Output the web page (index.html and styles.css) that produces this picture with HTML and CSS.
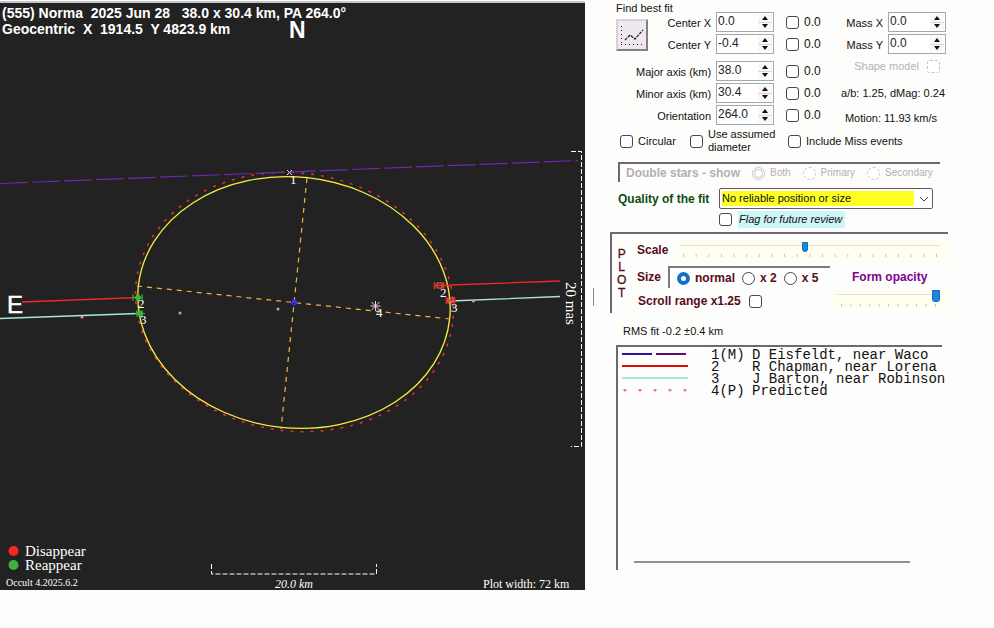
FILE: index.html
```html
<!DOCTYPE html>
<html lang="en">
<head>
<meta charset="utf-8">
<title>Occult - (555) Norma</title>
<link rel="stylesheet" href="styles.css">
</head>
<body>
<main class="app">
  <svg class="plot" viewBox="0 0 585 587" role="img" aria-label="Occultation plot">
    <g transform="translate(0 -3)">
      <g class="title">
        <text x="2" y="18">(555) Norma  2025 Jun 28   38.0 x 30.4 km, PA 264.0°</text>
        <text x="2" y="34">Geocentric  X  1914.5  Y 4823.9 km</text>
      </g>
      <text class="north" x="289" y="38">N</text>
      <text class="east" x="7" y="313">E</text>

      <ellipse class="limit" cx="294.5" cy="302" rx="159.5" ry="129" transform="rotate(8 294.5 302)"/>
      <ellipse class="fit" cx="294" cy="302.5" rx="156.5" ry="125.5" transform="rotate(6 294 302.5)"/>
      <path class="axis" d="M137 286L450 319M307 178L281 429"/>

      <path class="miss" d="M0 183.5L578 160.5"/>
      <path class="chord-red" d="M22 302L138 297.5M450 285L560 281"/>
      <path class="chord-teal" d="M0 318.5L138 313.5M450 301L560 296.5"/>

      <g class="green-mark">
        <path d="M133 294v7M137 294v7M142 294v7M133 297.5h10M137 310v7M142 310v7M135 313.500h10"/>
        <circle cx="138" cy="297.5" r="2.500"/><circle cx="140" cy="313.500" r="2.500"/>
      </g>
      <g class="red-mark">
        <path d="M434.500 282v7M443.500 282v7M434.500 285.500h16M446.500 297v7M454.500 297v7M446.500 300.500h9"/>
        <path class="box" d="M437 283h5v5h-5zM448 298h5v5h-5z"/>
      </g>

      <g class="predicted">
        <circle cx="82" cy="317" r="1.500"/><circle cx="180" cy="313" r="1.500"/>
        <circle cx="278" cy="309" r="1.500"/><circle cx="473.500" cy="301" r="1.500"/>
      </g>
      <path class="star" d="M375.500 301v10M370.500 306h10M371.500 302l8 8M379.500 302l-8 8"/>
      <path class="cross" d="M287 170l5 5M292 170l-5 5"/>
      <circle class="centre" cx="294" cy="302.500" r="2"/>
      <g class="number">
        <text x="290" y="184">1</text>
        <text x="138" y="308">2</text>
        <text x="140" y="324">3</text>
        <text x="440" y="297">2</text>
        <text x="451" y="312">3</text>
        <text x="376" y="317">4</text>
      </g>

      <path class="scale-bar" d="M571 151.500h10.500V446.500H571M211.500 564v10H376.500V564"/>
      <text class="mas" transform="translate(566 282) rotate(90)">20 mas</text>
      <circle class="disappear" cx="13.500" cy="551" r="5"/>
      <circle class="reappear" cx="13.500" cy="565" r="5"/>
      <text class="key" x="25" y="556">Disappear</text>
      <text class="key" x="25" y="570">Reappear</text>
      <text class="version" x="6" y="586">Occult 4.2025.6.2</text>
      <text class="km" x="275" y="588">20.0 km</text>
      <text class="width" x="483" y="588">Plot width: 72 km</text>
    </g>
  </svg>

  <div class="splitter"></div>

  <form class="panel">
    <section class="fit-section">
      <div class="finder">
        <span>Find best fit</span>
        <button class="fit-button" type="button" aria-label="Find best fit">
          <svg viewBox="0 0 28 28" width="28" height="28"><path class="dots" d="M3.500 5v19M3 23.500h21"/><path class="line" d="M7 19l5-5 5 4 8-9"/></svg>
        </button>
      </div>
      <div class="params">
        <div class="param"><label for="cx">Center X</label><span class="spin"><input id="cx" value="0.0"><span class="steps"><button type="button" aria-label="Up"></button><button type="button" aria-label="Down"></button></span></span><label class="check"><input type="checkbox">0.0</label></div>
        <div class="param"><label for="cy">Center Y</label><span class="spin"><input id="cy" value="-0.4"><span class="steps"><button type="button" aria-label="Up"></button><button type="button" aria-label="Down"></button></span></span><label class="check"><input type="checkbox">0.0</label></div>
        <div class="param spaced"><label for="major">Major axis (km)</label><span class="spin"><input id="major" value="38.0"><span class="steps"><button type="button" aria-label="Up"></button><button type="button" aria-label="Down"></button></span></span><label class="check"><input type="checkbox">0.0</label></div>
        <div class="param"><label for="minor">Minor axis (km)</label><span class="spin"><input id="minor" value="30.4"><span class="steps"><button type="button" aria-label="Up"></button><button type="button" aria-label="Down"></button></span></span><label class="check"><input type="checkbox">0.0</label></div>
        <div class="param"><label for="orient">Orientation</label><span class="spin"><input id="orient" value="264.0"><span class="steps"><button type="button" aria-label="Up"></button><button type="button" aria-label="Down"></button></span></span><label class="check"><input type="checkbox">0.0</label></div>
      </div>
      <div class="mass">
        <div class="param"><label for="mx">Mass X</label><span class="spin"><input id="mx" value="0.0"><span class="steps"><button type="button" aria-label="Up"></button><button type="button" aria-label="Down"></button></span></span></div>
        <div class="param"><label for="my">Mass Y</label><span class="spin"><input id="my" value="0.0"><span class="steps"><button type="button" aria-label="Up"></button><button type="button" aria-label="Down"></button></span></span></div>
        <label class="check shape">Shape model<input type="checkbox" disabled></label>
        <span class="ratio">a/b: 1.25, dMag: 0.24</span>
        <span class="motion">Motion: 11.93 km/s</span>
      </div>
    </section>

    <div class="options">
      <label class="check"><input type="checkbox">Circular</label>
      <label class="check"><input type="checkbox"><span>Use assumed<br>diameter</span></label>
      <label class="check"><input type="checkbox">Include Miss events</label>
    </div>

    <div class="double" role="radiogroup" aria-labelledby="double-title">
      <strong id="double-title">Double stars - show</strong>
      <label class="check"><input type="radio" name="double" checked disabled>Both</label>
      <label class="check"><input type="radio" name="double" disabled>Primary</label>
      <label class="check"><input type="radio" name="double" disabled>Secondary</label>
    </div>

    <div class="quality">
      <label for="quality">Quality of the fit</label>
      <div class="combo">
        <select id="quality"><option>No reliable position or size</option></select>
        <svg viewBox="0 0 10 6" width="10" height="6"><path d="M1 1l4 4 4-4"/></svg>
      </div>
      <label class="check flag"><input type="checkbox"><em>Flag for future review</em></label>
    </div>

    <section class="plot-options">
      <div class="vertical"><span>P</span><span>L</span><span>O</span><span>T</span></div>
      <div class="plot-rows">
        <div class="scale-row">
          <label for="scale">Scale</label>
          <div class="slider"><input id="scale" type="range" min="0" max="100" value="48"><div class="ticks"></div></div>
        </div>
        <div class="size-row">
          <span>Size</span>
          <div class="sizes" role="radiogroup" aria-label="Size">
            <label class="check"><input type="radio" name="size" checked>normal</label>
            <label class="check"><input type="radio" name="size">x 2</label>
            <label class="check"><input type="radio" name="size">x 5</label>
          </div>
          <label class="opacity-label" for="opacity">Form opacity</label>
        </div>
        <div class="scroll-row">
          <label class="check">Scroll range x1.25<input type="checkbox"></label>
          <div class="slider opacity"><input id="opacity" type="range" min="0" max="100" value="100"><div class="ticks"></div></div>
        </div>
      </div>
    </section>

    <p class="rms">RMS fit -0.2 ±0.4 km</p>

    <section class="observers">
      <ul>
        <li><i class="sample violet"></i><span>1(M)</span><span>D Eisfeldt, near Waco</span></li>
        <li><i class="sample red"></i><span>2</span><span>R Chapman, near Lorena</span></li>
        <li><i class="sample cyan"></i><span>3</span><span>J Barton, near Robinson</span></li>
        <li><i class="sample dotted"></i><span>4(P)</span><span>Predicted</span></li>
      </ul>
      <hr>
    </section>
  </form>
</main>
</body>
</html>
```
FILE: styles.css
```css
* { box-sizing: border-box; }

body {
  margin: 0;
  background: #fdfdfb;
  color: #111;
  font: 11px/14px "Liberation Sans", Arial, sans-serif;
}

.app {
  display: grid;
  grid-template-columns: minmax(0, 1fr) 25px 338px;
  padding-right: 46px;
}

/* Plot */
.plot {
  width: 100%;
  height: auto;
  margin-top: 1px;
  border-top: 2px solid #c4c4c4;
  background: #222;
  fill: none;
}
.plot text { fill: #fff; white-space: pre; font-family: "Liberation Serif", serif; }
.plot .title text { font: bold 14px "Liberation Sans", sans-serif; }
.plot .north { font: bold 23px "Liberation Sans", sans-serif; }
.plot .east { font: 24px "Liberation Sans", sans-serif; stroke: #fff; stroke-width: 0.5; }
.plot .number text { font-size: 13px; }
.plot .mas { font-size: 15px; }
.plot .key { font-size: 15px; }
.plot .version { font-size: 10px; }
.plot .km { font-size: 12px; font-style: italic; }
.plot .width { font-size: 12px; }
.fit { stroke: #f8f040; stroke-width: 1.3; }
.limit { stroke: #e83030; stroke-width: 1.5; stroke-dasharray: 3 7; }
.axis { stroke: #f0b838; stroke-width: 1.2; stroke-dasharray: 5 5; }
.miss { stroke: #6c28b0; stroke-width: 1.2; stroke-dasharray: 28 4; }
.chord-red { stroke: #f02828; stroke-width: 1.3; }
.chord-teal { stroke: #a8e8d4; stroke-width: 1.3; }
.green-mark { stroke: #38b838; fill: #38b838; }
.red-mark { stroke: #f02828; stroke-width: 1.5; }
.red-mark .box { stroke-width: 1; stroke: #ff6048; }
.predicted { fill: #e88cc8; }
.star { stroke: #f4c8f0; }
.cross { stroke: #dcc8f0; }
.centre { stroke: #2828ff; stroke-width: 2; }
.scale-bar { stroke: #fff; stroke-dasharray: 5 2; }
.disappear { fill: #f82828; }
.reappear { fill: #40b040; }

.splitter {
  width: 1px;
  height: 18px;
  margin: 288px 0 0 8px;
  background: #888;
}

/* Shared controls */
.check { display: flex; align-items: center; gap: 5px; }
input[type="checkbox"], input[type="radio"] {
  appearance: none;
  flex: none;
  width: 13px;
  height: 13px;
  margin: 0;
  border: 1px solid #504058;
  border-radius: 3px;
  background: #fff;
}
input[type="radio"] { border-radius: 50%; }
input[type="radio"]:checked { border: 4px solid #1470c8; }
input[type="checkbox"]:disabled, input[type="radio"]:disabled { border: 1px dashed #ccc0cc; }
input[type="radio"]:checked:disabled { border: 3px double #ccc0cc; }

.spin {
  display: flex;
  width: 58px;
  height: 20px;
  border: 1px solid #a0a8b0;
  background: #fff;
}
.spin input {
  flex: 1;
  min-width: 0;
  padding: 0 0 2px 1px;
  border: 0;
  background: none;
  color: #222;
  font: 12px "Liberation Sans", sans-serif;
}
.steps { display: grid; width: 16px; padding: 1px; }
.steps button {
  display: grid;
  place-items: center;
  padding: 0;
  border: 0;
  background: #faf6fa;
}
.steps button + button { border-top: 1px solid #dcd4dc; }
.steps button::before {
  content: "";
  border: 3px solid transparent;
  border-top-width: 0;
  border-bottom: 4px solid #111;
}
.steps button + button::before {
  border-top: 4px solid #111;
  border-bottom: 0;
}

/* Fit parameters */
.panel { padding-top: 1px; }
.fit-section {
  display: grid;
  grid-template-columns: 26px 1fr 108px;
  height: 127px;
}
.finder { position: relative; z-index: 1; width: 38px; height: 50px; padding-left: 6px; white-space: nowrap; }
.fit-button {
  display: block;
  width: 32px;
  height: 32px;
  margin-top: 4px;
  padding: 0;
  border: 2px outset #d8d0d8;
  background: #f0e8f0;
  fill: none;
}
.fit-button .dots { stroke: #222; stroke-dasharray: 1 3; }
.fit-button .line { stroke: #222; stroke-width: 1.3; stroke-dasharray: 3 1; }
.params, .mass { display: flex; flex-direction: column; gap: 2px; padding-top: 11px; }
.param { display: flex; height: 20px; }
.param > label:first-child { padding: 4px 5px 0 0; }
.params .param > label:first-child { width: 80px; text-align: right; white-space: nowrap; }
.param .check { margin-left: 12px; font-size: 12px; }
.param.spaced { margin-top: 5px; }
.mass .param { justify-content: flex-end; padding-right: 2px; }
.shape { justify-content: flex-end; gap: 8px; height: 20px; padding-right: 8px; color: #b8b0b8; }
.ratio { margin-top: 8px; padding-right: 3px; text-align: right; white-space: nowrap; }
.motion { margin-top: 9px; padding-right: 11px; text-align: right; }

.options {
  display: grid;
  grid-template-columns: 70px 98px 1fr;
  align-items: center;
  padding-left: 10px;
  height: 26px;
  line-height: 13px;
}

.double {
  display: flex;
  align-items: center;
  gap: 12px;
  height: 20px;
  margin: 8px 8px 0 8px;
  padding-left: 6px;
  border-top: 2px solid #706870;
  border-left: 2px solid #706870;
  color: #b4aeb4;
  font-size: 10px;
}
.double strong { font-size: 12px; }

.quality {
  display: grid;
  grid-template-columns: 101px 214px;
  align-items: center;
  row-gap: 2px;
  margin-top: 6px;
  padding-left: 8px;
}
.quality > label:first-child { color: #0c4c14; font-size: 12px; font-weight: bold; }
.combo { position: relative; }
.combo select {
  display: block;
  width: 100%;
  height: 21px;
  padding: 0 20px 1px 2px;
  appearance: none;
  border: 1px solid #605868;
  border-radius: 2px;
  background: linear-gradient(#ff2, #ff2) 2px 2px / 192px 15px no-repeat #fff;
  color: #111;
  font: 11px "Liberation Sans", sans-serif;
}
.combo svg { position: absolute; right: 4px; top: 8px; fill: none; stroke: #444; pointer-events: none; }
.flag { grid-column: 2; gap: 6px; }
.flag em { padding: 1px 3px 2px 1px; background: #ccf6f8; }

/* Plot options */
.plot-options {
  display: flex;
  gap: 12px;
  margin-top: 4px;
  height: 81px;
  padding-left: 5px;
  border-top: 2px solid #706870;
  border-left: 2px solid #706870;
  color: #580c20;
  font-size: 12px;
  font-weight: bold;
}
.vertical { display: grid; grid-auto-rows: 13px; place-items: center; width: 8px; padding-top: 13px; align-content: start; font-weight: normal; -webkit-text-stroke: 0.3px #580c20; }
.plot-rows { flex: 1; min-width: 0; padding-top: 7px; }
.scale-row { display: flex; align-items: center; gap: 9px; height: 18px; }
.slider { flex: 1; height: 18px; padding: 0 8px 0 3px; background: #fffff0; }
.slider input {
  appearance: none;
  display: block;
  width: 100%;
  height: 12px;
  margin: 0;
  background: linear-gradient(#e8dce8, #e8dce8) 0 4px / 100% 1px no-repeat;
}
.slider input::-webkit-slider-thumb {
  appearance: none;
  width: 6px;
  height: 10px;
  background: #1888e0;
  border: 1px solid #1468b8;
  border-radius: 0 0 3px 3px;
}
.ticks {
  height: 3px;
  margin: 1px 3px 0;
  border-right: 1px solid #dcb4dc;
  background: linear-gradient(90deg, #dcb4dc 1px, transparent 1px) 0 0 / 5% 100%;
}
.size-row { display: flex; align-items: center; height: 22px; margin-top: 7px; }
.sizes {
  display: flex;
  align-items: center;
  gap: 7px;
  width: 162px;
  height: 22px;
  margin-left: 7px;
  padding-left: 7px;
  border-top: 2px solid #807880;
  border-left: 2px solid #807880;
}
.opacity-label { margin-left: 22px; color: #800090; white-space: nowrap; }
.scroll-row { display: flex; justify-content: space-between; height: 24px; padding-top: 2px; }
.scroll-row .check { gap: 8px; margin-left: 1px; }
.slider.opacity { flex: 0 0 115px; padding: 0 8px 0 4px; }
.slider.opacity input::-webkit-slider-thumb { width: 8px; height: 12px; }
.slider.opacity .ticks { margin: 2px 4px 0; background-size: 10% 100%; }

.rms { margin: 11px 0 7px 13px; }

/* Observer list */
.observers {
  min-height: 225px;
  margin: 0 6px;
  border-top: 2px solid #706870;
  border-left: 2px solid #706870;
  display: flex;
  flex-direction: column;
  justify-content: space-between;
}
.observers ul {
  margin: 0;
  padding: 2px 0 0 4px;
  list-style: none;
  font: 14px/12px "Liberation Mono", monospace;
}
.observers li {
  display: grid;
  grid-template-columns: 66px 41px 1fr;
  white-space: nowrap;
}
.observers li .sample + span { margin-left: 23px; }
.observers li { grid-template-columns: 66px 64px 1fr; }
.sample { height: 2px; margin-top: 4px; }
.violet { background: linear-gradient(90deg, #3010a0 30px, transparent 30px 34px, #600c70 34px 64px, transparent 64px); }
.red { background: #e00808; }
.cyan { background: #98ece8; }
.dotted { height: 3px; background: radial-gradient(circle at 3px 1px, #e070c8 1px, transparent 2px) 0 0 / 15px 3px; }
.observers hr {
  width: 276px;
  max-width: 90%;
  height: 2px;
  margin: 0 0 7px 16px;
  border: 0;
  background: #988c90;
}
```
